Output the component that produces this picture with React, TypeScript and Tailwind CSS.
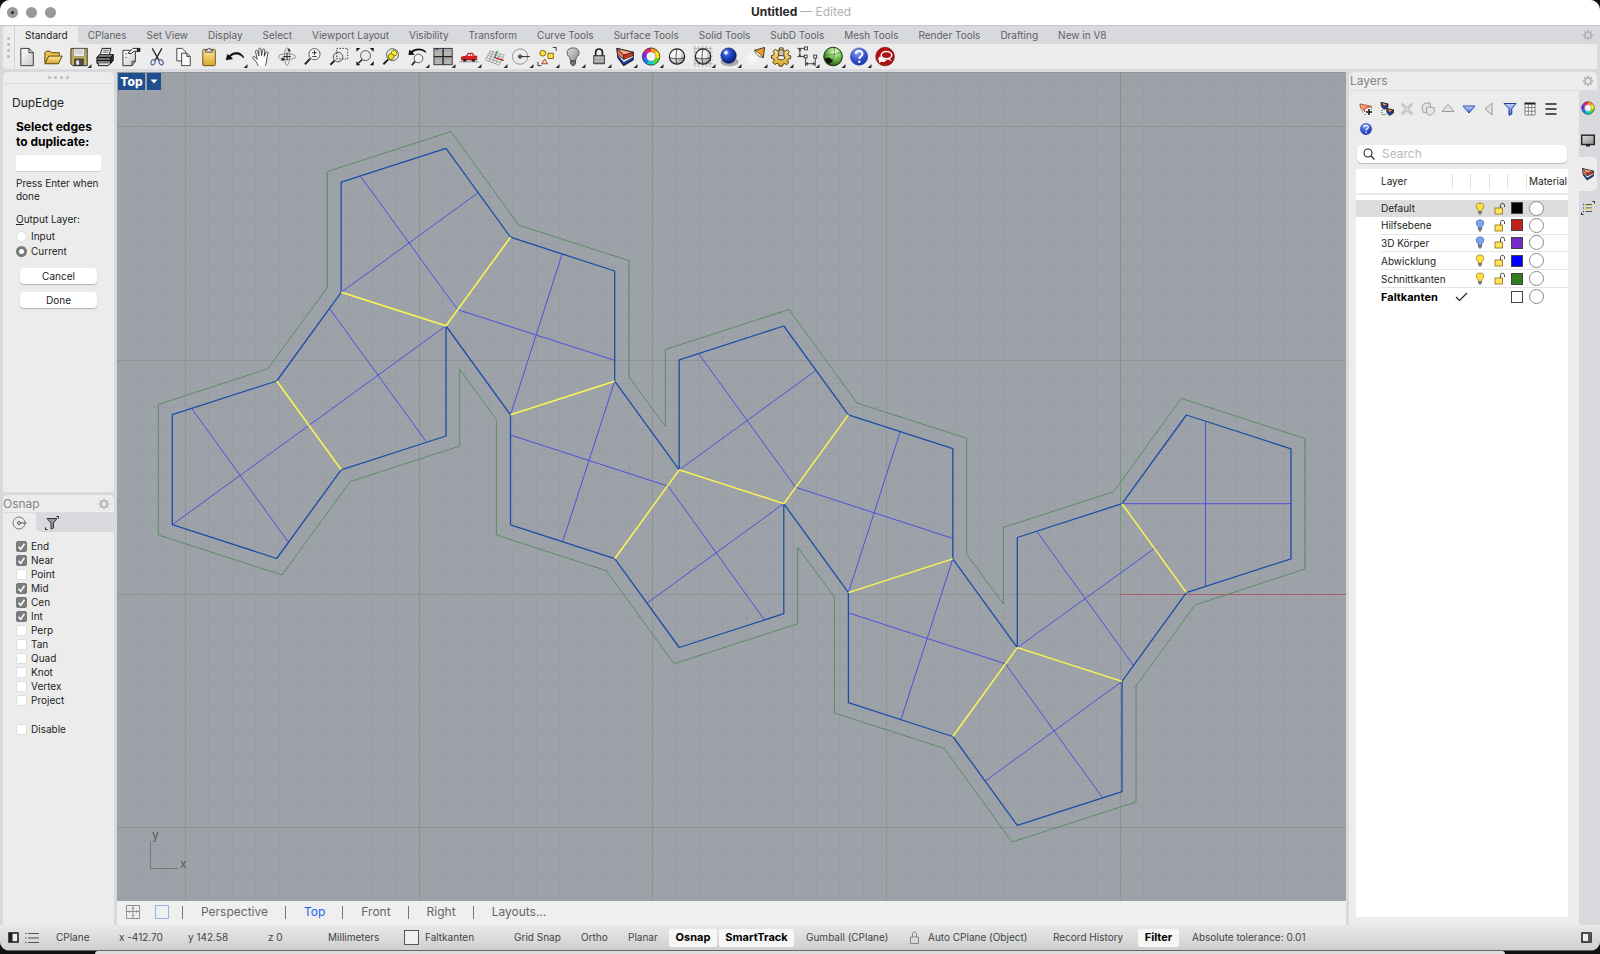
import React from "react";

type Node = React.ReactNode;

/* ---------- shared gradients ---------- */

function Gradients() {
  return (
    <svg width="0" height="0" className="absolute" aria-hidden="true">
      <defs>
        <linearGradient id="paper" x1="0" y1="0" x2="1" y2="1">
          <stop offset="0" stopColor="#ffffff" />
          <stop offset="1" stopColor="#c9c9c9" />
        </linearGradient>
        <linearGradient id="gold" x1="0" y1="0" x2="0" y2="1">
          <stop offset="0" stopColor="#fdeb9a" />
          <stop offset="1" stopColor="#d9a52c" />
        </linearGradient>
        <linearGradient id="pane" x1="0" y1="0" x2="1" y2="1">
          <stop offset="0" stopColor="#dedede" />
          <stop offset="1" stopColor="#8d8d8d" />
        </linearGradient>
        <radialGradient id="greyBall" cx="0.35" cy="0.3" r="0.75">
          <stop offset="0" stopColor="#ffffff" />
          <stop offset="0.5" stopColor="#eeeeee" />
          <stop offset="1" stopColor="#8a8a8a" />
        </radialGradient>
        <radialGradient id="blueBall" cx="0.35" cy="0.3" r="0.75">
          <stop offset="0" stopColor="#b9ccff" />
          <stop offset="0.3" stopColor="#2d55d8" />
          <stop offset="1" stopColor="#07166e" />
        </radialGradient>
        <radialGradient id="greenBall" cx="0.6" cy="0.25" r="0.8">
          <stop offset="0" stopColor="#f0ffe0" />
          <stop offset="0.45" stopColor="#7cc455" />
          <stop offset="1" stopColor="#1d4d10" />
        </radialGradient>
        <radialGradient id="helpBall" cx="0.4" cy="0.25" r="0.8">
          <stop offset="0" stopColor="#8ea4f5" />
          <stop offset="0.6" stopColor="#3350cf" />
          <stop offset="1" stopColor="#1c2f9e" />
        </radialGradient>
        <radialGradient id="glow">
          <stop offset="0" stopColor="#ffffff" stopOpacity="0.9" />
          <stop offset="1" stopColor="#ffffff" stopOpacity="0" />
        </radialGradient>
        <linearGradient id="blueFill" x1="0" y1="0" x2="0" y2="1">
          <stop offset="0" stopColor="#c3d4ff" />
          <stop offset="1" stopColor="#4169e0" />
        </linearGradient>
        <linearGradient id="orangeFill" x1="0" y1="0" x2="1" y2="1">
          <stop offset="0" stopColor="#ffc8a0" />
          <stop offset="1" stopColor="#e8501c" />
        </linearGradient>
      </defs>
    </svg>
  );
}

/* ---------- icons ---------- */

const WHEEL: [string, string][] = [
  ["M11 11V2A9 9 0 0 1 18 5.4Z", "#ff9a00"],
  ["M11 11L18 5.4A9 9 0 0 1 19.8 13Z", "#ffee00"],
  ["M11 11L19.8 13A9 9 0 0 1 14.9 19.1Z", "#55dd22"],
  ["M11 11L14.9 19.1A9 9 0 0 1 7.1 19.1Z", "#00d8c0"],
  ["M11 11L7.1 19.1A9 9 0 0 1 2.2 13Z", "#1878ff"],
  ["M11 11L2.2 13A9 9 0 0 1 4 5.4Z", "#8a20f0"],
  ["M11 11L4 5.4A9 9 0 0 1 11 2Z", "#f02060"],
];

function Wheel() {
  return (
    <>
      {WHEEL.map(([d, fill]) => (
        <path key={fill} d={d} fill={fill} />
      ))}
      <circle cx="11" cy="11" r="9" stroke="#222" fill="none" strokeWidth="0.8" />
      <circle cx="11" cy="11" r="5" fill="#f3f3f3" stroke="#555" strokeWidth="0.5" />
    </>
  );
}

function LayerStack() {
  return (
    <g strokeLinejoin="round">
      <path d="M2.500 2.500L19.500 6.500V14.500L9.500 20.500L3.500 12.500Z" fill="#1c3c9e" stroke="#111" />
      <path d="M3.200 9L9.700 16.800L19.500 11.500V9L9.700 13L3 7Z" fill="#fff" stroke="#444" strokeWidth="0.5" />
      <path d="M2.500 2.500L9.700 9.500V14L3.200 8.500Z" fill="#f07a50" stroke="#111" strokeWidth="0.7" />
      <path d="M9.700 9.500V14L19.500 10V6.500Z" fill="#d23c1c" stroke="#111" strokeWidth="0.7" />
      <path d="M2.500 2.500L19.500 6.500L9.700 9.500Z" fill="#ffa488" stroke="#111" strokeWidth="0.7" />
    </g>
  );
}

function HelpBall() {
  return (
    <>
      <circle cx="11" cy="11" r="9" fill="url(#helpBall)" stroke="#2a3fae" strokeWidth="0.6" />
      <path d="M7.6 8.3C7.6 4.2 14.6 4.2 14.6 8.2C14.6 10.8 11.2 10.8 11.2 13.4" fill="none" stroke="#fff" strokeWidth="2" />
      <circle cx="11.2" cy="16.3" r="1.3" fill="#fff" />
    </>
  );
}

const line = { fill: "none", stroke: "#222", strokeWidth: 1 } as const;

const TOOLS: { name: string; more?: boolean; art: Node }[] = [
  {
    name: "New",
    art: <path d="M4.5 2.5H13L17.5 7V20.5H4.5ZM13 2.5V7H17.5" fill="url(#paper)" stroke="#333" />,
  },
  {
    name: "Open",
    art: (
      <g stroke="#5a4010" strokeLinejoin="round">
        <path d="M2.5 17.5V7L4 5.5H8L9.5 7H17.5V10" fill="#e9c24a" />
        <path d="M2.5 18.5L6.5 10.5H20.5L16.5 18.5Z" fill="url(#gold)" />
      </g>
    ),
  },
  {
    name: "Save",
    more: true,
    art: (
      <g>
        <path d="M2.5 2.5H19.5V20.5H4.5L2.5 18.5Z" fill="#c2b04e" stroke="#333" />
        <rect x="5.5" y="3" width="11" height="8" fill="#ececec" stroke="#777" strokeWidth="0.6" />
        <path d="M7 5.5H15M7 7.5H15" stroke="#aaa" strokeWidth="0.7" />
        <rect x="6.5" y="13.5" width="9" height="7" fill="#4e4e4e" stroke="#222" strokeWidth="0.6" />
        <rect x="8" y="15" width="3" height="4.5" fill="#e8e8e8" />
      </g>
    ),
  },
  {
    name: "Print",
    art: (
      <g stroke="#111" strokeLinejoin="round">
        <path d="M6 9L8 2.5H17L15.5 9" fill="#fff" />
        <path d="M9 4.5H15M8.5 6.5H14.5" strokeWidth="0.7" />
        <path d="M2.5 12L5 9H19.5L17 12V18H2.5Z" fill="#8d8d8d" />
        <path d="M17 18L19.5 15V9L17 12Z" fill="#333" />
        <path d="M2.5 12H17M2.5 15H17" strokeWidth="1.4" />
        <path d="M4 18V20.5H14L17 18" fill="#ddd" />
      </g>
    ),
  },
  {
    name: "Document properties",
    art: (
      <g>
        <path d="M2.5 4.5H15.5V16L12 20.5H2.5Z" fill="url(#paper)" stroke="#333" />
        <path d="M15.5 16H12V20.5" fill="none" stroke="#333" />
        <path d="M5 8H6.500M5 12H6.500" stroke="#555" />
        <path d="M8 7.5L13 2.5H20V5.5H14L11 8Z" fill="#fff" stroke="#222" />
        <path d="M17 2V6H20.500V2Z" fill="#222" />
      </g>
    ),
  },
  {
    name: "Cut",
    art: (
      <g fill="none">
        <path d="M6 2.5L13 15M16 2.5L9 15" stroke="#222" strokeWidth="1.3" />
        <ellipse cx="6.800" cy="17" rx="2" ry="2.800" stroke="#4c5f9c" strokeWidth="1.200" transform="rotate(30 6.800 17)" />
        <ellipse cx="15.200" cy="17" rx="2" ry="2.800" stroke="#4c5f9c" strokeWidth="1.200" transform="rotate(-30 15.200 17)" />
      </g>
    ),
  },
  {
    name: "Copy",
    art: (
      <g fill="#fafafa" stroke="#444">
        <path d="M4.500 2.500H10L13.500 6V15.500H4.500Z" />
        <path d="M9.500 7.500H15L18.500 11V20.500H9.500ZM15 7.500V11H18.500" />
      </g>
    ),
  },
  {
    name: "Paste",
    art: (
      <g>
        <rect x="4.500" y="3.500" width="13" height="17" rx="1" fill="url(#gold)" stroke="#6a4c0c" />
        <path d="M7 6.500V4.500H9L10 2.500H12L13 4.500H15V6.500Z" fill="#d5d5d5" stroke="#444" strokeWidth="0.8" />
      </g>
    ),
  },
  {
    name: "Undo",
    more: true,
    art: (
      <g>
        <path d="M19.500 12.500C16 8 10.500 7.500 6.500 11L8.500 13.500L1.500 14.500L3 8.500L5 10C10 5 17 5.500 20.500 12Z" fill="#111" stroke="#111" strokeWidth="0.3" />
      </g>
    ),
  },
  {
    name: "Pan",
    art: (
      <path
        d="M8 20.500C7 17 4 15 2.500 12.500C2 11 3.800 10.500 5 11.800L7 14L5.300 6C5 4.300 7 4 7.400 5.500L8.800 10.500L8.600 3.500C8.600 1.800 10.700 1.800 10.900 3.500L11.500 10L12.700 4C13 2.500 15 2.800 14.900 4.500L14.300 10.800L16.200 6.800C17 5.300 18.600 6 18.200 7.500C17 12 17 17 15.500 20.500"
        fill="#fff"
        stroke="#333"
        strokeWidth="0.900"
      />
    ),
  },
  {
    name: "Rotate view",
    art: (
      <g {...line}>
        <ellipse cx="11" cy="11" rx="9" ry="3" stroke="#777" strokeWidth="0.800" />
        <ellipse cx="11" cy="11" rx="2.700" ry="9" stroke="#777" strokeWidth="0.800" />
        <path d="M11 7V15M7 11H15" />
        <path d="M6.500 12L8.500 14.500L5 15ZM13 2.500L14.500 5.500L11.800 5Z" fill="#222" strokeWidth="0.500" />
      </g>
    ),
  },
  {
    name: "Zoom dynamic",
    art: (
      <g>
        <path d="M2.500 19L8 13.200" stroke="#222" strokeWidth="2" />
        <circle cx="12.500" cy="8.500" r="5.800" fill="#f7f7f7" stroke="#555" />
        <path d="M10 7H15M12.500 4.700V9.300M10.200 11H14.800" stroke="#222" strokeWidth="0.900" />
      </g>
    ),
  },
  {
    name: "Zoom window",
    art: (
      <g {...line}>
        <path d="M2 19.500L6.500 15" strokeWidth="2" />
        <circle cx="10" cy="11.500" r="5" fill="#e4e4e4" stroke="#555" />
        <path d="M8.500 2.500H20V13.500H8.500Z" strokeDasharray="1.500 1.500" strokeWidth="0.900" />
      </g>
    ),
  },
  {
    name: "Zoom extents",
    art: (
      <g>
        <path d="M4 18L8 14" stroke="#222" strokeWidth="1.600" />
        <circle cx="11.500" cy="10" r="5.200" fill="#e8e8e8" stroke="#555" />
        <path d="M2 2H6L2 6ZM20 2V6L16 2ZM20 20H16L20 16ZM2 20V16L6 20Z" fill="#111" />
      </g>
    ),
  },
  {
    name: "Zoom selected",
    art: (
      <g>
        <path d="M3 19L8 14" stroke="#222" strokeWidth="2" />
        <circle cx="12.500" cy="9" r="6.200" fill="#eee" stroke="#555" />
        <circle cx="14" cy="7.500" r="3" fill="#fff04a" stroke="#8a7a00" />
        <circle cx="11" cy="11" r="3" fill="#f4dc20" stroke="#8a7a00" />
      </g>
    ),
  },
  {
    name: "Undo view change",
    more: true,
    art: (
      <g>
        <path d="M20 7C16 3.500 10.500 3.500 6.500 6.800L8.500 9L2 9.500L3 4L4.800 5.300C9 1.500 17 1.500 20.500 6Z" fill="#111" />
        <path d="M5.500 20L9 16" stroke="#222" strokeWidth="1.800" />
        <circle cx="12.500" cy="13" r="4.500" fill="#f2f2f2" stroke="#555" />
      </g>
    ),
  },
  {
    name: "Four viewports",
    more: true,
    art: (
      <g>
        <rect x="1.500" y="2.500" width="19" height="17" fill="#b3b3b3" stroke="#333" />
        <path d="M11 2.500V19.500M1.500 11H20.500" stroke="#222" strokeWidth="1.400" />
        <path d="M3 5H9.500M12.500 5H19M3 13.500H9.500M12.500 13.500H19" stroke="#999" strokeWidth="0.800" />
        <path d="M3 3.500H6" stroke="#1c2f9e" />
      </g>
    ),
  },
  {
    name: "Named view",
    more: true,
    art: (
      <g>
        <path d="M1 16.500H21" stroke="#888" />
        <path d="M3 14.500V11.500L8 10.500L10 7.500H15L16 10.500H19V14.500Z" fill="#e02020" stroke="#8a0000" strokeWidth="0.700" />
        <path d="M10.500 8.500H12.200V10.500H9.500ZM13 8.500H14.500V10.500H13Z" fill="#fff" />
        <circle cx="6.500" cy="14.800" r="1.600" fill="#222" />
        <circle cx="15.500" cy="14.800" r="1.600" fill="#222" />
      </g>
    ),
  },
  {
    name: "Set CPlane",
    more: true,
    art: (
      <g fill="none" stroke="#777" strokeWidth="0.600">
        <path d="M6 5L20.500 9.500L15 20L1 14.500ZM4.800 7.400L19.200 12M3.500 9.700L17.800 14.700M2.300 12L16.400 17.400M9 6L4.500 16M12.600 7L8 17.500M16.500 8.200L11.500 18.800" />
        <path d="M10.500 12L20 15" stroke="#c01818" strokeWidth="1.200" />
        <path d="M10.500 12L13.500 5" stroke="#2f8f2f" strokeWidth="1.200" />
      </g>
    ),
  },
  {
    name: "Object snap",
    more: true,
    art: (
      <g {...line}>
        <circle cx="10" cy="11" r="8" stroke="#888" strokeWidth="0.900" />
        <path d="M10 11H20" />
        <circle cx="10" cy="11" r="1.800" fill="#fff" />
        <circle cx="10" cy="11" r="0.700" fill="#111" />
      </g>
    ),
  },
  {
    name: "Select",
    more: true,
    art: (
      <g stroke="#7a5a00" strokeWidth="0.900">
        <circle cx="6.500" cy="7.500" r="3" fill="#ffe23c" />
        <rect x="12" y="7.500" width="5.500" height="5.500" fill="#ffe23c" />
        <path d="M8.500 13.500L11.500 18.500H5.500Z" fill="#ffd9b0" stroke="#8a3a20" />
        <path d="M17 1.500H20.500V5M1.500 16.500V20.500H5" fill="none" stroke="#222" />
      </g>
    ),
  },
  {
    name: "Hide",
    more: true,
    art: (
      <g>
        <path d="M11 2C3.500 2 3.500 9 7.500 12L8.500 15.500H13.500L14.500 12C18.500 9 18.500 2 11 2Z" fill="url(#pane)" stroke="#555" />
        <path d="M8.500 15.500H13.500V18.500L11.800 20.500H10.200L8.500 18.500Z" fill="#777" stroke="#333" strokeWidth="0.800" />
      </g>
    ),
  },
  {
    name: "Lock",
    more: true,
    art: (
      <g>
        <path d="M7.500 10V6.500C7.500 2 14.500 2 14.500 6.500V10" fill="none" stroke="#222" strokeWidth="1.800" />
        <rect x="5.500" y="10" width="11" height="8.500" fill="#999" stroke="#333" />
        <path d="M6 12.500H16M6 15.500H16" stroke="#d8d8d8" />
      </g>
    ),
  },
  { name: "Layers", more: true, art: <LayerStack /> },
  { name: "Object properties", more: true, art: <Wheel /> },
  {
    name: "Shade",
    art: (
      <g fill="none" stroke="#222">
        <circle cx="11" cy="11" r="8" fill="url(#greyBall)" strokeWidth="1.200" />
        <path d="M3 12C8 14 14 14 19 12M11 3C9.500 8 9.500 14 11 19" strokeWidth="0.800" />
      </g>
    ),
  },
  {
    name: "Ghosted shade",
    more: true,
    art: (
      <g fill="none">
        <path d="M1 2.500H21M1 6.500H21M1 10.500H21M1 14.500H21M1 18.500H21M2.500 0V22M6.500 0V22M10.500 0V22M14.500 0V22M18.500 0V22" stroke="#aaa" strokeWidth="0.900" />
        <circle cx="11" cy="11" r="8" fill="url(#greyBall)" stroke="#222" strokeWidth="1.200" />
        <path d="M3 12C8 14 14 14 19 12M11 3C9.500 8 9.500 14 11 19" stroke="#222" strokeWidth="0.800" />
      </g>
    ),
  },
  {
    name: "Render",
    more: true,
    art: (
      <g>
        <ellipse cx="11.500" cy="16.500" rx="9.500" ry="4.500" fill="#aaa" />
        <circle cx="10.500" cy="10" r="8" fill="url(#blueBall)" stroke="#06104a" strokeWidth="0.700" />
        <circle cx="7.800" cy="7" r="1.800" fill="#fff" opacity="0.850" />
      </g>
    ),
  },
  {
    name: "Spotlight",
    more: true,
    art: (
      <g>
        <circle cx="8" cy="13" r="8" fill="url(#glow)" />
        <path d="M10.500 4.500L21 1.500L19.500 12Z" fill="#f09a28" stroke="#222" strokeWidth="0.900" />
        <path d="M10.500 4.500C11 8 15 11.500 19.500 12C17 9 14 6 10.500 4.500Z" fill="#fff2c0" stroke="#222" strokeWidth="0.700" />
      </g>
    ),
  },
  {
    name: "Options",
    more: true,
    art: (
      <g stroke="#3a2a00" strokeWidth="0.900" strokeLinejoin="round">
        <path
          d="M9.500 2H13L13.500 4.500L15.500 5.300L17.700 3.800L19.500 6L18 8L18.700 9.700L21 10.300V13L18.600 13.500L17.800 15.400L19 17.500L16.800 19.500L14.800 18.200L13 19L12.500 21H9L8.500 18.800L6.700 18L4.600 19.300L2.500 17L3.800 15L3 13.200L1 12.700V10L3.300 9.400L4 7.500L2.700 5.500L5 3.600L7 5L9 4.300Z"
          fill="url(#gold)"
        />
        <path d="M8.500 12V6.500C8.500 3 14 3 14 6.500V12Z" fill="#c9c9c9" />
        <path d="M7 12.500C7.500 9 14.500 9 15 12.500C14 15 8 15 7 12.500Z" fill="#ececec" />
      </g>
    ),
  },
  {
    name: "Dimensions",
    more: true,
    art: (
      <g {...line} strokeWidth={0.9}>
        <path d="M1 2.500H9M1 11H9M3.500 3V10.500M2.500 5L3.500 3L4.500 5M2.500 9L3.500 10.500L4.500 9" />
        <path d="M9.500 13V21M19.500 13V21M10 18.500H19M12 17L10 18.500L12 20M17 17L19 18.500L17 20" />
        <rect x="8.500" y="1" width="3" height="3" fill="#fff" />
        <rect x="8" y="9.500" width="3" height="3" fill="#fff" />
        <rect x="18" y="9.500" width="3" height="3" fill="#fff" />
      </g>
    ),
  },
  {
    name: "Grasshopper",
    more: true,
    art: (
      <g>
        <circle cx="11" cy="11" r="9.700" fill="url(#greenBall)" stroke="#15300c" />
        <path d="M3 9C8 10 15 9 19.500 6M8 19C12 14 13 7 12 2" stroke="#3d7a2a" fill="none" strokeWidth="0.700" />
        <path d="M2 13L7 12L11 15L7.500 18.500L5 18Z" fill="#0c1c08" />
      </g>
    ),
  },
  { name: "Help", more: true, art: <HelpBall /> },
  {
    name: "Feedback",
    art: (
      <g>
        <circle cx="11" cy="11" r="9.700" fill="#b01212" stroke="#7a0a0a" strokeWidth="0.700" />
        <ellipse cx="12.500" cy="9.500" rx="5.500" ry="3.800" fill="none" stroke="#fff" strokeWidth="1.500" />
        <path d="M4 13.500C4 11 6 10.500 7.500 11C8 13 10 14.500 13 14C12 16.500 8.500 17 7 16.500L4.500 18L5 15.500C4.300 15 4 14.500 4 13.500Z" fill="#fff" />
        <path d="M15 12L18 15.500L12.500 13.500Z" fill="#fff" />
      </g>
    ),
  },
];

function Gear({ className = "" }: { className?: string }) {
  const teeth = [0, 45, 90, 135, 180, 225, 270, 315];
  return (
    <button aria-label="Panel options" className={`shrink-0 ${className}`}>
      <svg width="12" height="12" viewBox="0 0 12 12" fill="none" stroke="#b2b2b4">
        <circle cx="6" cy="6" r="3" strokeWidth="1.600" />
        {teeth.map((a) => (
          <path key={a} d="M6 0.600V2.600" strokeWidth="1.500" transform={`rotate(${a} 6 6)`} />
        ))}
      </svg>
    </button>
  );
}

/* ---------- title bar, ribbon ---------- */

function TitleBar() {
  return (
    <header className="relative flex h-[26px] shrink-0 items-center border-b border-[#c6c7cb] bg-white">
      <div className="flex gap-2 pl-[7px]">
        <button aria-label="Close" className="flex size-[11px] items-center justify-center rounded-full bg-[#999]">
          <span className="size-[3px] rounded-full bg-[#222]" />
        </button>
        <button aria-label="Minimize" className="size-[11px] rounded-full bg-[#999]" />
        <button aria-label="Zoom" className="size-[11px] rounded-full bg-[#999]" />
      </div>
      <h1 className="absolute inset-x-0 top-1 pl-[2px] text-center text-[12px] leading-4 font-bold text-[#262626]">
        Untitled <span className="font-normal text-[#b0b0b0]">— Edited</span>
      </h1>
    </header>
  );
}

const TABS = [
  "CPlanes", "Set View", "Display", "Select", "Viewport Layout", "Visibility", "Transform", "Curve Tools",
  "Surface Tools", "Solid Tools", "SubD Tools", "Mesh Tools", "Render Tools", "Drafting", "New in V8",
];

function Ribbon() {
  return (
    <div className="flex h-[43px] shrink-0 pr-[3px] pl-[3px]">
      <div className="flex w-[12px] flex-col items-center justify-center gap-[3px] rounded-l border-r border-[#d3d4d8] bg-[#ececec]">
        {[0, 1, 2, 3].map((i) => (
          <span key={i} className="size-[3px] rounded-full bg-[#bbb]" />
        ))}
      </div>
      <div className="flex min-w-0 flex-1 flex-col bg-[#ececec]">
        <nav className="flex h-[18px] text-[10px] leading-[18px] text-[#606164]">
          <button className="shrink-0 px-[10px] text-[#222]">Standard</button>
          <div className="flex min-w-0 flex-1 items-center rounded-bl-[5px] bg-[#d8d9dd] pr-[3px]">
            {TABS.map((t) => (
              <button key={t} className="px-[10px] whitespace-nowrap">
                {t}
              </button>
            ))}
            <Gear className="ml-auto" />
          </div>
        </nav>
        <div className="flex h-[25px] items-end">
          {TOOLS.map((t) => (
            <button key={t.name} aria-label={t.name} className="flex w-[26px] shrink-0 justify-center">
              <svg width="24" height="24" viewBox="0 0 24 24">
                <g transform="translate(0.500 1) scale(0.960)">{t.art}</g>
                {t.more && <path d="M23.500 19V23H19.500Z" fill="#333" />}
              </svg>
            </button>
          ))}
        </div>
      </div>
    </div>
  );
}

/* ---------- left column ---------- */

function CommandPanel() {
  return (
    <section className="flex h-[420px] shrink-0 flex-col rounded-t-[5px] bg-[#ececec]">
      <div className="flex h-[12px] shrink-0 items-center justify-center gap-[3px] border-b border-[#dcdcdf]">
        {[0, 1, 2, 3].map((i) => (
          <span key={i} className="size-[3px] rounded-full bg-[#bdbdbd]" />
        ))}
      </div>
      <h2 className="mt-[11px] ml-[9px] text-[12px] leading-4 text-[#222]">DupEdge</h2>
      <form className="flex flex-col pr-[13px] pl-[13px] text-[10px] leading-[13px] text-[#222]" onSubmit={(e) => e.preventDefault()}>
        <label htmlFor="edges" className="mt-2 text-[12px] leading-[15px] font-bold text-black">
          Select edges
          <br />
          to duplicate:
        </label>
        <input id="edges" className="mt-[6px] h-[17px] rounded-[2px] border-b border-[#cfcfcf] bg-white px-1 outline-none" />
        <p className="mt-[5px]">
          Press Enter when
          <br />
          done
        </p>
        <fieldset>
          <legend className="pt-[9px] leading-[14px]">
            <span className="underline">O</span>utput Layer:
          </legend>
          <label className="mt-[3px] flex h-[15px] items-center gap-1">
            <input type="radio" name="output" className="size-[11px] appearance-none rounded-full border border-[#dcdcdc] bg-white" />
            Input
          </label>
          <label className="flex h-[15px] items-center gap-1">
            <input
              type="radio"
              name="output"
              defaultChecked
              className="size-[11px] appearance-none rounded-full border-[3px] border-[#7a7a7a] bg-white"
            />
            Current
          </label>
        </fieldset>
        <div className="mt-[9px] flex flex-col gap-2 px-1">
          <button type="button" className="h-4 rounded-[4px] bg-white leading-4 shadow-[0_1px_1px_rgba(0,0,0,0.25)]">
            Cancel
          </button>
          <button type="button" className="h-4 rounded-[4px] bg-white leading-4 shadow-[0_1px_1px_rgba(0,0,0,0.25)]">
            Done
          </button>
        </div>
      </form>
    </section>
  );
}

const SNAPS: [string, boolean][] = [
  ["End", true], ["Near", true], ["Point", false], ["Mid", true], ["Cen", true], ["Int", true],
  ["Perp", false], ["Tan", false], ["Quad", false], ["Knot", false], ["Vertex", false], ["Project", false],
];

function Check({ label, on }: { label: string; on: boolean }) {
  return (
    <label className="flex h-[14px] items-center gap-1">
      <span className="relative flex">
        <input
          type="checkbox"
          defaultChecked={on}
          className="peer size-[11px] appearance-none rounded-[2px] border border-[#dedede] bg-white checked:border-[#777] checked:bg-[#7d7d7d]"
        />
        <svg viewBox="0 0 11 11" className="pointer-events-none absolute inset-0 hidden size-[11px] peer-checked:block">
          <path d="M2.500 5.800L4.700 8.200L8.500 2.800" fill="none" stroke="#fff" strokeWidth="1.500" />
        </svg>
      </span>
      {label}
    </label>
  );
}

function OsnapPanel() {
  return (
    <section className="mt-[3px] flex min-h-0 flex-1 flex-col rounded-t-[5px] bg-[#ececec]">
      <div className="flex h-[18px] shrink-0 items-center justify-between border-b border-[#dcdcdf] pr-1 text-[12px] text-[#858585]">
        <h2>Osnap</h2>
        <Gear />
      </div>
      <div className="flex h-[19px] shrink-0">
        <button aria-label="Object snaps" className="flex w-[33px] items-center justify-center">
          <svg width="16" height="16" viewBox="0 0 16 16" fill="none" stroke="#555">
            <circle cx="7" cy="8" r="6" stroke="#777" />
            <circle cx="7" cy="8" r="1.500" />
            <path d="M8.500 8H14.500" />
          </svg>
        </button>
        <button aria-label="Selection filter" className="flex flex-1 items-center rounded-bl-[5px] bg-[#d8d9dd] pl-2">
          <svg width="16" height="16" viewBox="0 0 16 16">
            <path d="M3 3.500H13L9.500 8V13L7 14V8Z" fill="#999" stroke="#333" />
            <path d="M12.500 1.500H14.500V3.500M1.500 12.500V14.500H3.500" fill="none" stroke="#222" />
          </svg>
        </button>
      </div>
      <div className="flex flex-col pt-[7px] pl-[13px] text-[10px] leading-[14px] text-[#222]">
        {SNAPS.map(([n, on]) => (
          <Check key={n} label={n} on={on} />
        ))}
        <div className="mt-[15px]">
          <Check label="Disable" on={false} />
        </div>
      </div>
    </section>
  );
}

/* ---------- viewport ---------- */

const OUTLINE =
  "341.200,182.200 446,148.400 510.500,237.200 614.700,271 614.700,381.200 679.200,469.900 679.200,359.800 783.800,326 848.400,414.900 952.800,448.700 952.800,558.900 1017.300,647.600 1017.300,537.500 1122,503.700 1186.400,415 1291,448.800 1291,558.800 1186.400,592.600 1122,681.400 1122,791.600 1017.300,825.300 952.800,736.500 848.400,702.600 848.400,592.600 783.800,503.700 783.800,613.700 679.200,647.500 614.700,558.700 510.500,524.800 510.500,414.800 446,326 446,436 341.200,469.800 276.700,558.500 172.300,524.700 172.300,414.700 276.700,381 341.200,292.300";

const FOLDS = [
  "M341.200 292.300L446 325.800L510.500 237.200",
  "M276.700 381L341.200 469.800",
  "M510.500 414.800L614.700 381.200",
  "M614.700 558.700L679.200 469.900L783.800 503.600L848.400 414.900",
  "M848.400 592.600L952.800 558.900",
  "M952.800 736.500L1017.300 647.600L1122 681.400",
  "M1122 503.700L1186.400 592.600",
].join("");

const AXES = [
  "M360.500 176.200L457.500 309.600L614.700 360.300",
  "M341.200 292.300L477.700 193",
  "M329.500 308.500L426.300 441.700",
  "M172.300 524.700L446 325.800",
  "M191.800 408.600L288.400 542.200",
  "M562 254.500L510.500 414.800",
  "M614.700 381.200L562.700 541.700",
  "M510.500 435L668.200 486.200L764.400 619.800",
  "M783.800 503.600L647.200 603",
  "M698.700 353.700L795.500 487.200L952.800 538.400",
  "M679.200 469.900L815.800 370.500",
  "M900.200 431.800L848.400 592.600",
  "M952.800 558.900L901 719.500",
  "M848.400 612.900L1005.500 663.800L1102.500 797.700",
  "M1122 681.400L985.300 781",
  "M1036.800 531.400L1133.200 665",
  "M1017.300 647.600L1154 548.800",
  "M1122 503.700H1291",
  "M1205.500 421V586",
].join("");

const CUT =
  "158.300,404.500 267.700,368.800 327.300,287.600 327.300,171.600 451,131.600 518.800,225.200 628.900,260.600 628.900,376.600 665.300,426.500 665.300,349.500 789,309.500 857,403 966.700,438.300 966.700,554.200 1003.400,604 1003.400,527.400 1113.500,491.800 1181.300,398.400 1304.800,438.500 1304.800,569 1195,605 1136,686 1136,802 1012,842 944.200,748.400 834.500,713 834.500,597.200 797.700,547.200 797.700,623.800 674,663.700 606.300,570.700 496.400,535 496.400,419.400 459.700,369.200 459.700,446 350,481.700 282,575 158.300,535";

const MINOR = 23.36;

function Viewport() {
  const lines: Node[] = [];
  for (let i = -43; i <= 100; i++) {
    const x = Math.round(1119.5 + i * MINOR) + 0.5;
    const y = Math.round(593.5 + i * MINOR) + 0.5;
    const stroke = i % 10 === 0 ? "#8d9395" : "#989da4";
    lines.push(<path key={`v${i}`} d={`M${x} 0V3000`} stroke={stroke} />);
    if (i > -25) lines.push(<path key={`h${i}`} d={`M0 ${y}H4000`} stroke={stroke} />);
  }
  return (
    <div className="relative min-h-0 flex-1 overflow-hidden border-t border-[#8f949b] bg-[#9da2a9]">
      <svg className="absolute inset-0 size-full" role="img" aria-label="Top viewport drawing">
        <g transform="translate(-117 -73)" fill="none">
          {lines}
          <path d="M1120.500 0V594" stroke="#73997a" />
          <path d="M1120 594.500H4000" stroke="#a65f66" />
          <polygon points={CUT} stroke="#5d8b62" />
          <path d={AXES} stroke="#4646e2" strokeWidth="0.900" />
          <polygon points={OUTLINE} stroke="#1a4ea6" strokeWidth="1.300" strokeLinejoin="round" />
          <path d={FOLDS} stroke="#fbf650" strokeWidth="1.500" />
          <path d="M150.500 841V868.500H178" stroke="#74787c" />
        </g>
        <g fill="#565a5e" fontSize="12" fontFamily="Inter, sans-serif">
          <text x="35" y="766">y</text>
          <text x="63" y="795">x</text>
        </g>
      </svg>
      <div className="relative flex gap-[2px] pl-px text-[12px] leading-[17px] font-extrabold text-white">
        <button className="h-[17px] w-[27px] bg-[#1f4f8f] text-center">Top</button>
        <button aria-label="Viewport menu" className="flex h-[17px] w-[14px] items-center justify-center bg-[#1f4f8f]">
          <svg width="8" height="5" viewBox="0 0 8 5">
            <path d="M0.500 0.500H7.500L4 4.500Z" fill="#fff" />
          </svg>
        </button>
      </div>
    </div>
  );
}

function ViewTabs() {
  const sep = <span className="h-[13px] w-px bg-[#777]" />;
  return (
    <nav className="flex h-6 shrink-0 items-center bg-[#efefef] pb-[2px] pl-[9px] text-[12px] text-[#666]">
      <button aria-label="Four views" className="mr-[15px]">
        <svg width="14" height="14" viewBox="0 0 14 14" fill="none" stroke="#888">
          <path d="M0.500 0.500H13.500V13.500H0.500ZM7 0V14M0 6.500H14" strokeWidth="0.900" />
          <path d="M3.500 5V8M10.500 5V8M5.500 3.500H8.500M5.500 10.500H8.500" strokeWidth="0.700" />
        </svg>
      </button>
      <button aria-label="Single view" className="mr-[13px] size-[14px] border border-[#9ab4ee]" />
      {sep}
      <button className="mr-[17px] ml-[18px]">Perspective</button>
      {sep}
      <button className="mr-[17px] ml-[18px] text-[#1f5ff0]">Top</button>
      {sep}
      <button className="mr-[17px] ml-[18px]">Front</button>
      {sep}
      <button className="mr-[17px] ml-[18px]">Right</button>
      {sep}
      <button className="mr-[17px] ml-[18px]">Layouts...</button>
    </nav>
  );
}

/* ---------- layers panel ---------- */

const LAYER_TOOLS: { name: string; art: Node }[] = [
  {
    name: "New layer",
    art: (
      <g strokeLinejoin="round">
        <path d="M1 2L12.500 4.500V8L6 13L2 7.500Z" fill="#fff" stroke="#888" strokeWidth="0.700" />
        <path d="M1 2L12.500 4.500L6 6.500V10L1.500 5Z" fill="url(#orangeFill)" stroke="#a33a18" strokeWidth="0.700" />
        <path d="M10 6.500V13.500M6.500 10H13.500" stroke="#fff" strokeWidth="3" />
        <path d="M10 7V13M7 10H13" stroke="#111" strokeWidth="1.500" />
      </g>
    ),
  },
  {
    name: "New sublayer",
    art: (
      <g stroke="#222" strokeWidth="0.800" strokeLinejoin="round">
        <path d="M1 0.500L8 2V5L4 7.500L1.500 4.500Z" fill="#1c3c9e" />
        <path d="M1 0.500L8 2L4 4.500Z" fill="#ff8a5c" />
        <path d="M6.500 6.500L13.500 8V11L9.500 13.500L7 10.500Z" fill="#1c3c9e" />
        <path d="M6.500 6.500L13.500 8L9.500 10.500Z" fill="#ff8a5c" />
        <path d="M2 8V12.500H6" fill="none" strokeDasharray="1 1" />
      </g>
    ),
  },
  {
    name: "Delete layer",
    art: <path d="M2.500 1.500L7 5.500L11.500 1.500L12.500 2.500L8.500 7L12.500 11.500L11.500 12.500L7 8.500L2.500 12.500L1.500 11.500L5.500 7L1.500 2.500Z" fill="#e2e2e2" stroke="#999" strokeWidth="0.800" />,
  },
  {
    name: "Duplicate layer",
    art: (
      <g fill="#e6e6e6" stroke="#999" strokeWidth="0.900">
        <path d="M2 2.500L5 1H9L9.500 5V10L2.500 10.500L1 7Z" />
        <path d="M5 6L8 5L13 5.500L13.500 10L9 13.500L6 11.500Z" />
      </g>
    ),
  },
  { name: "Move up", art: <path d="M7 2.500L13 9.500H1Z" fill="#e2e2e2" stroke="#999" /> },
  { name: "Move down", art: <path d="M1 4H13L7 11Z" fill="url(#blueFill)" stroke="#2a4cb0" /> },
  { name: "Outdent", art: <path d="M3 7L10 1V13Z" fill="#e2e2e2" stroke="#999" /> },
  { name: "Filter", art: <path d="M1 1.500H13L8.800 6.500V12L6 13.300V6.500Z" fill="url(#blueFill)" stroke="#1f3c96" /> },
  {
    name: "Columns",
    art: (
      <g fill="#fff" stroke="#777" strokeWidth="0.900">
        <path d="M2 1.500H12V13H2ZM2 5.500H12M2 9.200H12M5.300 1.500V13M8.700 1.500V13" />
        <path d="M1.500 1.500H12.500" stroke="#222" strokeWidth="2" />
      </g>
    ),
  },
  { name: "Menu", art: <path d="M1.500 2H12.500M1.500 7H12.500M1.500 12H12.500" stroke="#222" strokeWidth="1.300" /> },
  { name: "Layer help", art: <g transform="scale(0.636)"><HelpBall /></g> },
];

const LAYERS: { name: string; bulb?: string; color: string; current?: boolean }[] = [
  { name: "Default", bulb: "#ffe045", color: "#000000" },
  { name: "Hilfsebene", bulb: "#7aa4ee", color: "#bf2218" },
  { name: "3D Körper", bulb: "#7aa4ee", color: "#7429cc" },
  { name: "Abwicklung", bulb: "#ffe045", color: "#0000ff" },
  { name: "Schnittkanten", bulb: "#ffe045", color: "#2f7d20" },
  { name: "Faltkanten", color: "#ffffff", current: true },
];

function LayersTable() {
  return (
    <div className="min-h-0 flex-1 overflow-hidden bg-white text-[10px] text-[#222]">
      <table className="w-full table-fixed border-collapse">
        <colgroup>
          <col className="w-[25px]" />
          <col />
          <col className="w-[18px]" />
          <col className="w-[19px]" />
          <col className="w-[18px]" />
          <col className="w-[19px]" />
          <col className="w-[42px]" />
        </colgroup>
        <thead>
          <tr>
            <th />
            <th className="pt-[5px] pb-1 text-left leading-[15px] font-normal">Layer</th>
            {["Current", "On", "Locked", "Color"].map((h) => (
              <th key={h} className="pt-[5px] pb-1" aria-label={h}>
                <div className="h-[15px] border-l border-[#e0e0e0]" />
              </th>
            ))}
            <th className="pt-[5px] pb-1 text-left font-normal whitespace-nowrap">
              <div className="h-[15px] border-l border-[#e0e0e0] pl-[2px] leading-[15px]">Material</div>
            </th>
          </tr>
        </thead>
      </table>
      <div className="mb-[5px] h-[2px] bg-[#ebebeb]" />
      <table className="h-[105px] w-full table-fixed border-collapse leading-[14px]">
        <colgroup>
          <col className="w-[25px]" />
          <col />
          <col className="w-[18px]" />
          <col className="w-[19px]" />
          <col className="w-[18px]" />
          <col className="w-[19px]" />
          <col className="w-[42px]" />
        </colgroup>
        <tbody>
          {LAYERS.map((l, i) => {
            const rule = i > 0 && i < LAYERS.length - 1 ? "border-b border-[#e4e4e4]" : "";
            return (
              <tr key={l.name} className={i === 0 ? "bg-[#dcdcdc]" : ""}>
                <td />
                <td className={`whitespace-nowrap ${rule} ${l.current ? "text-[11px] font-bold text-black" : ""}`}>{l.name}</td>
                <td className={rule}>
                  {l.current && (
                    <svg width="13" height="10" viewBox="0 0 13 10" className="ml-[3px] block" aria-label="Current layer">
                      <path d="M1 5L4.500 8.500L12 1" fill="none" stroke="#222" strokeWidth="1.200" />
                    </svg>
                  )}
                </td>
                <td className={rule}>
                  {l.bulb && (
                    <svg width="10" height="13" viewBox="0 0 10 13" className="ml-[5px] block">
                      <path d="M5 1C0.500 1 0.500 5 3 7.500L3.500 9.500H6.500L7 7.500C9.500 5 9.500 1 5 1Z" fill={l.bulb} stroke={l.bulb === "#ffe045" ? "#9a7a10" : "#3a5aa0"} strokeWidth="0.800" />
                      <path d="M3.500 9.500H6.500V11L5.500 12.300H4.500L3.500 11Z" fill="#888" stroke="#444" strokeWidth="0.500" />
                    </svg>
                  )}
                </td>
                <td className={rule}>
                  {l.bulb && (
                    <svg width="12" height="13" viewBox="0 0 12 13" className="ml-[5px] block">
                      <path d="M6.500 6.500V3.500C6.500 0.500 10.500 0.500 10.500 3.500V5" fill="none" stroke="#333" />
                      <rect x="1" y="6" width="7.500" height="6" fill="#ffe45a" stroke="#8a6c10" strokeWidth="0.800" />
                    </svg>
                  )}
                </td>
                <td className={rule}>
                  <svg width="12" height="12" className="ml-1 block" aria-label={`${l.name} color`}>
                    <rect x="0.500" y="0.500" width="11" height="11" fill={l.color} stroke="#444" />
                  </svg>
                </td>
                <td className={rule}>
                  <div className="ml-[3px] size-[15px] rounded-full border border-[#888] bg-white" />
                </td>
              </tr>
            );
          })}
        </tbody>
      </table>
    </div>
  );
}

function RightTabs() {
  return (
    <nav className="flex w-[18px] shrink-0 flex-col items-center bg-[#d8d9dd]">
      <button aria-label="Properties" className="flex h-[33px] items-center">
        <svg width="14" height="14" viewBox="1 1 20 20">
          <Wheel />
        </svg>
      </button>
      <button aria-label="Display" className="flex h-[33px] items-center">
        <svg width="14" height="14" viewBox="0 0 14 14">
          <rect x="0.700" y="1.200" width="12.600" height="9.300" fill="url(#pane)" stroke="#222" strokeWidth="1.400" />
          <path d="M5 10.500H9V12.500H5Z" fill="#222" />
        </svg>
      </button>
      <button aria-label="Layers" className="flex h-[34px] w-full items-center justify-center rounded-r-[5px] bg-[#ececec]">
        <svg width="14" height="14" viewBox="0 0 22 22">
          <LayerStack />
        </svg>
      </button>
      <button aria-label="Selection" className="flex h-[33px] items-center">
        <svg width="14" height="14" viewBox="0 0 14 14">
          <path d="M4.500 3.500H11M4.500 7H11M4.500 10.500H11" stroke="#555" strokeWidth="1.200" />
          <path d="M4.500 4.500H11M4.500 8H11" stroke="#f3d84a" />
          <path d="M2 3.500H3M2 7H3M2 10.500H3" stroke="#3a5aa0" strokeWidth="1.600" />
          <path d="M11.500 0.500H13.500V2.500M0.500 11.500V13.500H2.500" fill="none" stroke="#222" />
        </svg>
      </button>
    </nav>
  );
}

function LayersPanel() {
  return (
    <aside className="flex w-[248px] shrink-0 flex-col overflow-hidden rounded-t-[5px] bg-[#ececec]">
      <div className="flex h-[19px] shrink-0 items-center justify-between border-b border-[#dcdcdf] pr-[3px] pl-px text-[12px] text-[#858585]">
        <h2>Layers</h2>
        <Gear />
      </div>
      <div className="flex min-h-0 flex-1">
        <div className="flex min-w-0 flex-1 flex-col pr-[11px] pb-2 pl-[7px]">
          <div className="grid w-[205px] grid-cols-10 pt-2">
            {LAYER_TOOLS.map((t) => (
              <button key={t.name} aria-label={t.name} className="flex h-5 items-center justify-center">
                <svg width="14" height="14" viewBox="0 0 14 14">
                  {t.art}
                </svg>
              </button>
            ))}
          </div>
          <label className="mx-px mt-[6px] flex h-[18px] shrink-0 items-center gap-[7px] rounded-[5px] bg-white pl-[6px] shadow-[0_1px_1px_rgba(0,0,0,0.2)]">
            <svg width="12" height="12" viewBox="0 0 12 12" fill="none" stroke="#222" strokeWidth="1.100">
              <circle cx="5" cy="5" r="4" />
              <path d="M8 8L11.500 11.500" />
            </svg>
            <input
              type="search"
              aria-label="Search layers"
              placeholder="Search"
              className="min-w-0 flex-1 bg-transparent text-[12px] leading-4 outline-none placeholder:text-[#b8b8b8]"
            />
          </label>
          <div className="mt-[6px] flex min-h-0 flex-1 flex-col">
            <LayersTable />
          </div>
        </div>
        <RightTabs />
      </div>
    </aside>
  );
}

/* ---------- status bar ---------- */

function StatusBar() {
  return (
    <footer className="flex h-[26px] shrink-0 items-center border-b border-[#666] bg-linear-to-b from-[#e9e9e9] to-[#cfcfcf] pr-2 pl-2 text-[10px] whitespace-nowrap text-[#444]">
      <button aria-label="Toggle left panels" className="w-[17px]">
        <svg width="11" height="11" viewBox="0 0 11 11">
          <rect x="1" y="1" width="9" height="9" fill="#eee" stroke="#222" strokeWidth="1.600" />
          <path d="M1 1H4.500V10H1Z" fill="#222" />
        </svg>
      </button>
      <button aria-label="Command list" className="w-[31px]">
        <svg width="14" height="12" viewBox="0 0 14 12" stroke="#555">
          <path d="M0 1.500H1.500M0 6H1.500M0 10.500H1.500M3 1.500H14M3 6H14M3 10.500H14" />
        </svg>
      </button>
      <button className="w-[63px] text-left">CPlane</button>
      <span className="w-[69px]">x -412.70</span>
      <span className="w-[80px]">y 142.58</span>
      <span className="w-[60px]">z 0</span>
      <button className="w-[76px] text-left">Millimeters</button>
      <button className="flex w-[110px] items-center gap-[6px]">
        <span className="size-[15px] border border-[#555] bg-[#f0f0f0]" />
        Faltkanten
      </button>
      <button className="w-[67px] text-left">Grid Snap</button>
      <button className="w-[47px] text-left">Ortho</button>
      <button className="w-[41px] text-left">Planar</button>
      <button className="mr-[2px] h-[18px] w-[48px] rounded-[2px] bg-[#f6f6f6] text-center text-[11px] font-bold text-black">Osnap</button>
      <button className="mr-[12px] h-[18px] w-[75px] rounded-[2px] bg-[#f6f6f6] text-center text-[11px] font-bold text-black">SmartTrack</button>
      <button className="w-[104px] text-left">Gumball (CPlane)</button>
      <button className="flex w-[143px] items-center gap-[9px]">
        <svg width="9" height="13" viewBox="0 0 9 13" fill="none" stroke="#888">
          <path d="M2.500 6V3C2.500 0 6.500 0 6.500 3V6M0.500 6H8.500V12.500H0.500Z" />
        </svg>
        Auto CPlane (Object)
      </button>
      <button className="w-[85px] text-left">Record History</button>
      <button className="mr-[13px] h-[18px] w-[41px] rounded-[2px] bg-[#f6f6f6] text-center text-[11px] font-bold text-black">Filter</button>
      <span>Absolute tolerance: 0.01</span>
      <button aria-label="Toggle right panels" className="ml-auto">
        <svg width="11" height="11" viewBox="0 0 11 11">
          <rect x="1" y="1" width="9" height="9" fill="#eee" stroke="#222" strokeWidth="1.600" />
          <path d="M7 1H10V10H7Z" fill="#555" />
        </svg>
      </button>
    </footer>
  );
}

export default function App() {
  return (
    <div className="flex h-screen min-h-[760px] flex-col bg-[#111] font-['Inter','Liberation_Sans',sans-serif]">
      <Gradients />
      <div className="flex min-h-0 flex-1 flex-col overflow-hidden rounded-[10px] bg-[#d8d9dd]">
        <TitleBar />
        <Ribbon />
        <main className="flex min-h-0 flex-1 gap-[3px] pt-[3px] pr-[3px] pl-[3px]">
          <div className="flex w-[111px] shrink-0 flex-col">
            <CommandPanel />
            <OsnapPanel />
          </div>
          <div className="flex min-w-0 flex-1 flex-col">
            <Viewport />
            <ViewTabs />
          </div>
          <LayersPanel />
        </main>
        <StatusBar />
      </div>
      <div className="mx-[95px] h-[3px] shrink-0 rounded-t bg-[#dcdcdc]" />
    </div>
  );
}
